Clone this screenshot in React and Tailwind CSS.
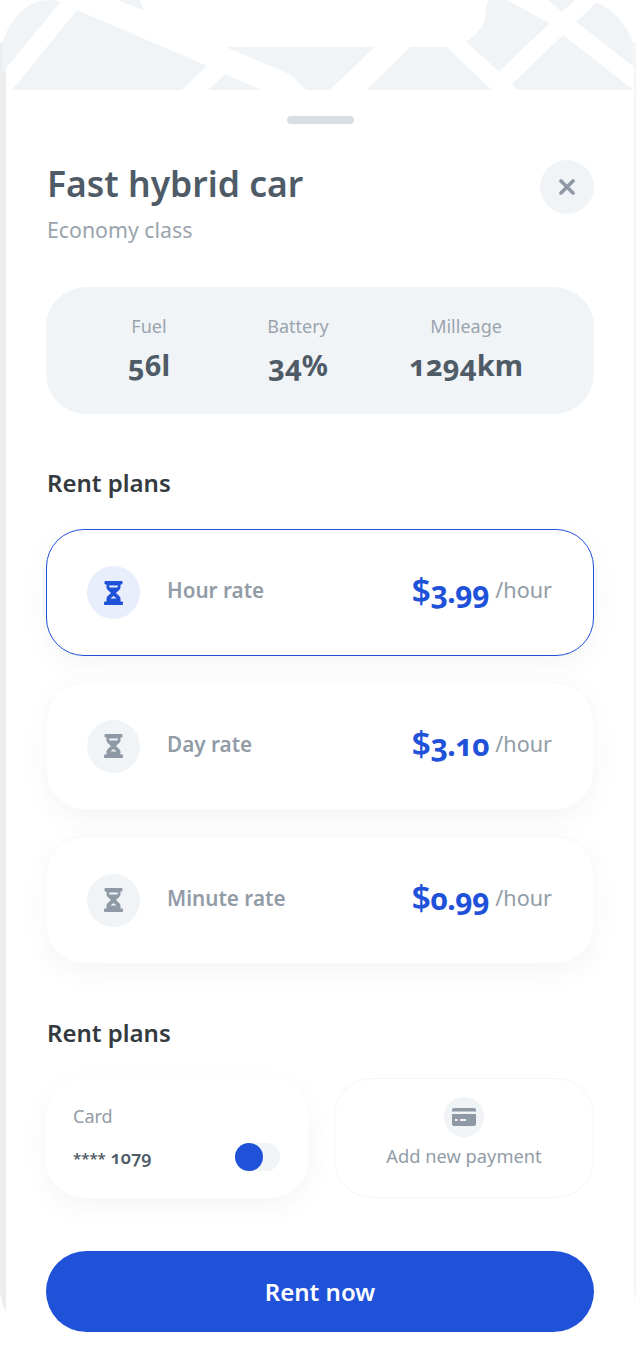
const FONT = "font-['Noto_Sans',sans-serif]";

const PLANS = [
  { name: "Hour rate", price: "3.99", active: true },
  { name: "Day rate", price: "3.10" },
  { name: "Minute rate", price: "0.99" },
];

const STATS = [
  { label: "Fuel", value: "56l", cls: "w-[122px] ml-[42px]" },
  { label: "Battery", value: "34%", cls: "w-[120px] ml-[28px]" },
  { label: "Milleage", value: "1294km", cls: "w-[140px] ml-[38px]" },
];

function MapBackground() {
  return (
    <svg
      className="absolute left-0 top-0 w-[636px] h-[90px]"
      viewBox="0 0 1568 270"
      preserveAspectRatio="none"
      fill="#f1f4f7"
    >
      <path d="M15 205 L150 5 Q120 -5 90 5 Q30 35 5 130 L5 225 Z" />
      <path d="M190 30 L510 197 L448 270 L15 270 L15 292 Z" />
      <path d="M290 0 L345 0 L355 32 Z" />
      <path d="M555 140 L925 140 L813 270 L755 270 L718 225 Z" />
      <path d="M555 222 L645 270 L513 270 Z" />
      <path d="M1012 140 L1100 140 L1213 270 L903 270 Z" />
      <path d="M1205 0 L1250 0 L1355 70 L1230 215 L1150 125 Q1198 85 1197 40 Q1197 15 1205 0 Z" />
      <path d="M1350 0 L1420 0 L1385 35 Z" />
      <path d="M1470 8 L1420 65 L1562 200 L1562 130 Q1530 35 1470 8 Z" />
      <path d="M1388 105 L1562 270 L1275 270 L1262 252 Z" />
    </svg>
  );
}

function Hourglass({ color, sand }) {
  return (
    <svg width="19" height="24" viewBox="0 0 19 24">
      <rect x="0.5" width="18" height="3.4" rx="1" fill={color} />
      <rect x="0" y="20.6" width="19" height="3.4" rx="1" fill={color} />
      <path d="M2.5 3 H16.5 V6.5 C16.5 8.8 13.2 10.4 12 12 C13.2 13.6 16.5 15.2 16.5 17.5 V21 H2.5 V17.5 C2.5 15.2 5.8 13.6 7 12 C5.8 10.4 2.5 8.8 2.5 6.5 Z" fill={color} />
      <path d="M5 4.6 H14 L13.4 6.4 H5.6 Z" fill={sand} />
      <path d="M9.5 15 L12.6 17.6 H6.4 Z" fill={sand} />
    </svg>
  );
}

function PlanCard({ name, price, active }) {
  return (
    <div
      className={`rounded-[38px] bg-white flex items-center pl-[40px] pr-[41px] shadow-[0_8px_24px_rgba(60,80,110,0.06)] border ${
        active ? "h-[127px] border-[#1f52d9]" : "h-[128px] border-[#f8f9fa]"
      }`}
    >
      <div
        className={`w-[53px] h-[53px] rounded-full flex items-center justify-center ${
          active ? "bg-[#e8eefb]" : "bg-[#f1f4f7]"
        }`}
      >
        <Hourglass color={active ? "#1f52d9" : "#8e99a5"} sand={active ? "#e8eefb" : "#f1f4f7"} />
      </div>
      <span className="ml-[27px] pb-[3px] text-[20.7px] font-semibold text-[#929ca7]">{name}</span>
      <span className="ml-auto pb-[5px] text-[30px] font-bold text-[#1f52d9] tracking-[-0.5px]">
        <span className="text-[34px] font-semibold">$</span>
        <span className="[font-feature-settings:'onum']">{price}</span>
      </span>
      <span className="ml-[6px] pb-[4px] text-[21.6px] text-[#929ca7]">/hour</span>
    </div>
  );
}

export default function App() {
  return (
    <div className={`relative w-[636px] h-[1370px] overflow-hidden bg-white ${FONT}`}>
      {/* phone frame and map behind the sheet */}
      <div className="absolute left-0 top-[43px] w-[636px] h-[1295px] rounded-b-[50px] border-l-[6px] border-r-[2px] border-l-[#ededed] border-r-[#f5f5f5]" />
      <MapBackground />

      <div className="relative mt-[90px] ml-[6px] mr-[2px] h-[1280px] rounded-t-[40px] bg-white px-[40px]">
        <div className="flex justify-center pt-[26px]">
          <div className="w-[67px] h-[8px] rounded-full bg-[#d9dee3]" />
        </div>

        <div className="mt-[36px] flex items-start justify-between">
          <div className="pl-[1px]">
            <h1 className="text-[35.5px] leading-[46px] font-semibold text-[#4f5b67]">Fast hybrid car</h1>
            <p className="mt-[10px] text-[21.3px] leading-[28px] text-[#9aa4ae]">Economy class</p>
          </div>
          <button className="w-[54px] h-[54px] rounded-full bg-[#f1f4f7] flex items-center justify-center">
            <svg width="16" height="16" viewBox="0 0 16 16">
              <path d="M2 2 L14 14 M14 2 L2 14" stroke="#8e99a5" strokeWidth="3.6" strokeLinecap="round" />
            </svg>
          </button>
        </div>

        <div className="mt-[43px] h-[127px] rounded-[40px] bg-[#f1f4f7] flex items-center">
          {STATS.map((s) => (
            <div key={s.label} className={`text-center pb-[4px] ${s.cls}`}>
              <p className="text-[18px] leading-[26px] text-[#9aa4ae]">{s.label}</p>
              <p className="mt-[6px] text-[29px] leading-[40px] font-bold text-[#4f5b67] [font-feature-settings:'onum']">
                {s.value}
              </p>
            </div>
          ))}
        </div>

        <h2 className="mt-[53px] pl-[1px] text-[24px] leading-[32px] font-semibold text-[#333a40]">Rent plans</h2>

        <div className="mt-[30px] flex flex-col gap-[26px]">
          {PLANS.map((p) => (
            <PlanCard key={p.name} {...p} />
          ))}
        </div>

        <h2 className="mt-[53px] pl-[1px] text-[24px] leading-[32px] font-semibold text-[#333a40]">Rent plans</h2>

        <div className="mt-[29px] flex justify-between">
          <div className="w-[262px] h-[120px] rounded-[38px] bg-white px-[27px] pt-[25px] shadow-[0_8px_24px_rgba(60,80,110,0.06)]">
            <p className="text-[18px] leading-[26px] text-[#929ca7]">Card</p>
            <div className="mt-[14px] flex items-center justify-between pr-[1px]">
              <span className="text-[18px] font-semibold text-[#4f5b67]">
                <span className="text-[15px]">****</span>{" "}
                <span className="[font-feature-settings:'onum']">1079</span>
              </span>
              <div className="w-[45px] h-[28px] rounded-full bg-[#f1f4f7]">
                <div className="w-[28px] h-[28px] rounded-full bg-[#1f52d9]" />
              </div>
            </div>
          </div>

          <div className="w-[260px] h-[120px] rounded-[38px] border border-[#f4f6f7] bg-white flex flex-col items-center pt-[18px]">
            <div className="w-[40px] h-[40px] rounded-full bg-[#f1f4f7] flex items-center justify-center">
              <svg width="24" height="18" viewBox="0 0 24 18" fill="#8e99a5">
                <path d="M2 0 H22 A2 2 0 0 1 24 2 V3.5 H0 V2 A2 2 0 0 1 2 0 Z" />
                <path d="M0 6 H24 V16 A2 2 0 0 1 22 18 H2 A2 2 0 0 1 0 16 Z M3 11 V13 H5.5 V11 Z M8 11 V13 H14 V11 Z" fillRule="evenodd" />
              </svg>
            </div>
            <span className="mt-[6px] text-[18.3px] leading-[26px] text-[#929ca7]">Add new payment</span>
          </div>
        </div>

        <button className="mt-[53px] w-full h-[81px] rounded-full bg-[#1f52d9] text-white text-[24px] font-semibold">
          Rent now
        </button>
      </div>
    </div>
  );
}
